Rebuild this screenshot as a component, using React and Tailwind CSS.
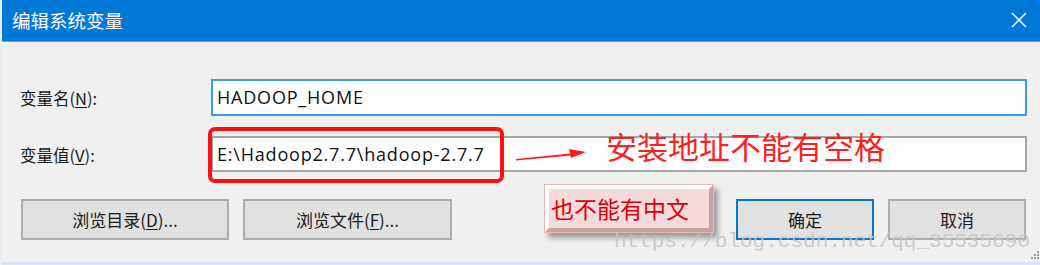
export default function App() {
  const ui = { fontFamily: '"Open Sans", "Noto Sans CJK SC", sans-serif' };
  const cjk = { fontFamily: '"Noto Sans CJK SC", "Open Sans", sans-serif' };
  return (
    <div className="relative w-[1040px] h-[265px] overflow-hidden bg-[#f0f0f0] flex flex-col border-l-2 border-[#e6eef6]" style={cjk}>
      {/* Title bar */}
      <div className="h-[42px] bg-[#0078d7] flex items-center justify-between pl-[10px] pr-[12px] border-b border-[#5aa5e6]">
        <span className="text-white text-[18.5px] leading-none">编辑系统变量</span>
        <svg width="16" height="16" viewBox="0 0 16 16" className="mr-[1px] mt-[-2px]">
          <path d="M1 1 L15 15 M15 1 L1 15" stroke="#ffffff" strokeWidth="1.4" />
        </svg>
      </div>

      {/* Body */}
      <div className="flex-1 flex flex-col pl-[18px] pr-[13px] pt-[37px]">
        <div className="flex items-center h-[37px]">
          <div className="w-[191px] text-[16.5px] text-[#1a1a1a] pt-[2px]">
            变量名(<span className="underline underline-offset-2">N</span>):
          </div>
          <div className="flex-1 h-[37px] bg-white border-2 border-[#3d98e6] flex items-center pl-[4px] text-[18px] tracking-[0.8px] text-[#111]" style={ui}>
            HADOOP_HOME
          </div>
        </div>
        <div className="flex items-center h-[36px] mt-[20px]">
          <div className="w-[191px] text-[16.5px] text-[#1a1a1a] pt-[2px]">
            变量值(<span className="underline underline-offset-2">V</span>):
          </div>
          <div className="flex-1 h-[36px] bg-white border-2 border-[#a6a6a6] flex items-center pl-[4px] text-[18px] tracking-[0.8px] text-[#111]" style={ui}>
            E:\Hadoop2.7.7\hadoop-2.7.7
          </div>
        </div>
        <div className="flex items-center mt-[27px] h-[41px]">
          <button className="w-[208px] h-[41px] ml-[1px] bg-[#e1e1e1] border-2 border-[#adadad] text-[17px] text-[#1a1a1a]">
            浏览目录(<span className="underline underline-offset-2">D</span>)...
          </button>
          <button className="w-[209px] h-[41px] ml-[14px] bg-[#e1e1e1] border-2 border-[#adadad] text-[17px] text-[#1a1a1a]">
            浏览文件(<span className="underline underline-offset-2">F</span>)...
          </button>
          <div className="flex-1" />
          <button className="w-[138px] h-[41px] bg-[#e1e1e1] border-2 border-[#0078d7] text-[17px] text-[#1a1a1a]">
            确定
          </button>
          <button className="w-[138px] h-[41px] ml-[14px] mr-[1px] bg-[#e1e1e1] border-2 border-[#adadad] text-[17px] text-[#1a1a1a]">
            取消
          </button>
        </div>
      </div>
      <div className="h-[3px] bg-[#d6e6f5]" />

      {/* Annotations */}
      <div className="absolute left-[206px] top-[127px] w-[296px] h-[56px] border-[4px] border-[#ff1010] rounded-[7px]" />
      <svg className="absolute left-[512px] top-[144px]" width="76" height="20" viewBox="0 0 76 20">
        <polygon points="2,15 56,9.5 55,5 72,8 57,14 56.5,11.5 2,16.5" fill="#ff1a1a" />
      </svg>
      <div className="absolute left-[604px] top-[126px] text-[31px] leading-[40px] text-[#ff1f1f]">安装地址不能有空格</div>

      <div className="absolute left-[542px] top-[184px] w-[170px] h-[49px] bg-[#f6dadb] border border-[#e8b8b8] shadow-[4px_5px_5px_rgba(0,0,0,0.35)]">
        <div className="w-full h-full border-[4px] border-t-white border-l-white border-r-[#c9a3a4] border-b-[#c9a3a4] flex items-center pl-[2px]">
          <span className="text-[23px] leading-none text-[#d8000c]">也不能有中文</span>
        </div>
      </div>

      <div className="absolute left-[612px] top-[228px] text-[21px] leading-[28px] text-[#c4c4c4] opacity-80 pointer-events-none" style={{ fontFamily: '"Liberation Mono", monospace' }}>
        https://blog.csdn.net/qq_35535690
      </div>

      <svg className="absolute left-[1028px] top-[250px]" width="10" height="10" viewBox="0 0 10 10">
        <rect x="7" y="1" width="2" height="2" fill="#a0a0a0" />
        <rect x="4" y="4" width="2" height="2" fill="#a0a0a0" />
        <rect x="7" y="4" width="2" height="2" fill="#a0a0a0" />
        <rect x="1" y="7" width="2" height="2" fill="#a0a0a0" />
        <rect x="4" y="7" width="2" height="2" fill="#a0a0a0" />
        <rect x="7" y="7" width="2" height="2" fill="#a0a0a0" />
      </svg>
    </div>
  );
}
